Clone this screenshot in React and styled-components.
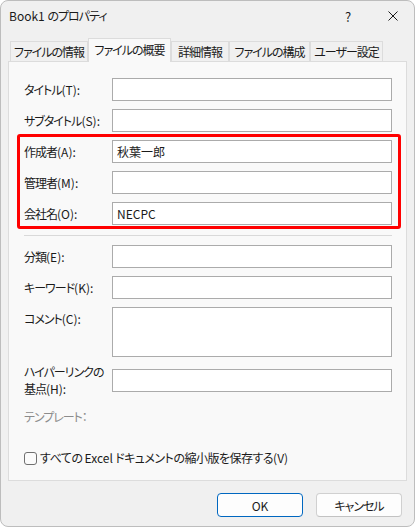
import React from "react";
import styled, { createGlobalStyle } from "styled-components";

const GlobalStyle = createGlobalStyle`
  html, body {
    margin: 0;
    padding: 0;
    background: #ffffff;
  }
  body {
    font-family: "Noto Sans CJK JP", "Noto Sans", sans-serif;
    font-size: 12px;
    color: #1b1b1b;
    font-feature-settings: "palt";
  }
`;

const Window = styled.div`
  width: 415px;
  height: 527px;
  box-sizing: border-box;
  border: 1px solid #bdbdbd;
  border-radius: 8px;
  background: #f0f0f0;
  display: flex;
  flex-direction: column;
  overflow: hidden;
`;

const TitleBar = styled.div`
  height: 30px;
  flex: none;
  display: flex;
  align-items: center;
  padding-left: 8px;
`;

const Title = styled.div`
  flex: 1;
  font-size: 12px;
  line-height: 16px;
  letter-spacing: -1px;
`;

const Latin = styled.span`
  letter-spacing: 0;
`;

const TitleButton = styled.div`
  width: ${({ w }) => w}px;
  height: 30px;
  display: flex;
  align-items: center;
  justify-content: center;
  font-size: 13px;
`;

const Body = styled.div`
  padding: 7px 7px 0 7px;
  display: flex;
  flex-direction: column;
`;

const TabRow = styled.div`
  display: flex;
  align-items: flex-end;
  padding-left: 2px;
  height: 23px;
`;

const Tab = styled.div`
  width: ${({ w }) => w}px;
  height: ${({ active }) => (active ? 24 : 20)}px;
  margin-bottom: ${({ active }) => (active ? -1 : 0)}px;
  box-sizing: border-box;
  border: 1px solid #dcdcdc;
  border-bottom: none;
  background: ${({ active }) => (active ? "#f9f9f9" : "#f0f0f0")};
  position: relative;
  z-index: ${({ active }) => (active ? 2 : 0)};
  display: flex;
  align-items: center;
  justify-content: center;
  padding-bottom: ${({ active }) => (active ? 2 : 0)}px;
  font-size: 12px;
  letter-spacing: -1px;
  white-space: nowrap;
`;

const Panel = styled.div`
  height: 420px;
  box-sizing: border-box;
  border: 1px solid #dcdcdc;
  background: #f9f9f9;
  padding: 16px 14px 14px 15px;
  display: flex;
  flex-direction: column;
  position: relative;
  z-index: 1;
`;

const Form = styled.div`
  display: flex;
  flex-direction: column;
  gap: 8px;
`;

const Row = styled.div`
  display: flex;
  align-items: ${({ top }) => (top ? "flex-start" : "center")};
  margin-top: ${({ shift }) => shift || 0}px;
`;

const Label = styled.div`
  flex: 0 0 88px;
  line-height: ${({ tall }) => (tall ? 17 : 16)}px;
  padding-top: ${({ top }) => (top ? 4 : 0)}px;
  letter-spacing: -1px;
  white-space: nowrap;
`;

const Key = styled.span`
  letter-spacing: 0;
`;

const Field = styled.input`
  flex: 1;
  min-width: 0;
  height: 23px;
  box-sizing: border-box;
  border: 1px solid #ababab;
  background: #ffffff;
  padding: 0 4px;
  margin: 0;
  font: inherit;
  color: #1b1b1b;
  outline: none;
`;

const Area = styled.textarea`
  flex: 1;
  min-width: 0;
  height: 50px;
  box-sizing: border-box;
  border: 1px solid #ababab;
  background: #ffffff;
  padding: 2px 4px;
  margin: 0;
  font: inherit;
  resize: none;
  outline: none;
`;

const Highlight = styled.div`
  display: flex;
  flex-direction: column;
  gap: 8px;
  position: relative;

  &::after {
    content: "";
    position: absolute;
    top: -6px;
    bottom: -4px;
    left: -7px;
    right: -9px;
    border: 3px solid #ff0000;
    border-radius: 3px;
    pointer-events: none;
  }
`;

const Separator = styled.div`
  height: 1px;
  background: #d9d9d9;
  margin: 2px 0 1px 0;
`;

const Muted = styled.div`
  color: #8c8c8c;
  line-height: 16px;
  margin-top: 4px;
  letter-spacing: -1px;
`;

const CheckRow = styled.label`
  margin-top: auto;
  display: flex;
  align-items: center;
  gap: 3px;
  line-height: 16px;
`;

const CheckText = styled.span`
  letter-spacing: -0.5px;
`;

const Box = styled.span`
  width: 13px;
  height: 13px;
  box-sizing: border-box;
  border: 1px solid #707070;
  border-radius: 3px;
  background: #fbfbfb;
  flex: none;
`;

const Footer = styled.div`
  display: flex;
  justify-content: flex-end;
  gap: 13px;
  padding: 12px 5px 0 0;
`;

const Button = styled.button`
  width: 86px;
  height: 24px;
  box-sizing: border-box;
  border: 1px solid ${({ primary }) => (primary ? "#0067c0" : "#d0d0d0")};
  border-bottom-color: ${({ primary }) => (primary ? "#0067c0" : "#c2c2c2")};
  border-radius: 4px;
  background: #fdfdfd;
  font: inherit;
  letter-spacing: ${({ primary }) => (primary ? 0 : -1)}px;
  color: #1b1b1b;
  padding: 0;
`;

const tabs = [
  { name: "ファイルの情報", w: 78 },
  { name: "ファイルの概要", w: 83, active: true },
  { name: "詳細情報", w: 58 },
  { name: "ファイルの構成", w: 81 },
  { name: "ユーザー設定", w: 73 },
];

function FieldRow({ text, hotkey, value = "" }) {
  return (
    <Row>
      <Label>
        {text}
        <Key>({hotkey}):</Key>
      </Label>
      <Field readOnly defaultValue={value} />
    </Row>
  );
}

export default function App() {
  return (
    <>
      <GlobalStyle />
      <Window>
        <TitleBar>
          <Title>
            <Latin>Book1 </Latin>のプロパティ
          </Title>
          <TitleButton w={48}>?</TitleButton>
          <TitleButton w={42}>
            <svg width="10" height="10" viewBox="0 0 10 10">
              <path d="M0.5 0.5L9.5 9.5M9.5 0.5L0.5 9.5" stroke="#1b1b1b" strokeWidth="1" />
            </svg>
          </TitleButton>
        </TitleBar>
        <Body>
          <TabRow>
            {tabs.map((t) => (
              <Tab key={t.name} w={t.w} active={t.active}>
                {t.name}
              </Tab>
            ))}
          </TabRow>
          <Panel>
            <Form>
              <FieldRow text="タイトル" hotkey="T" />
              <FieldRow text="サブタイトル" hotkey="S" />
              <Highlight>
                <FieldRow text="作成者" hotkey="A" value="秋葉一郎" />
                <FieldRow text="管理者" hotkey="M" />
                <FieldRow text="会社名" hotkey="O" value="NECPC" />
              </Highlight>
              <Separator />
              <FieldRow text="分類" hotkey="E" />
              <FieldRow text="キーワード" hotkey="K" />
              <Row top>
                <Label top>
                  コメント<Key>(C):</Key>
                </Label>
                <Area readOnly defaultValue="" />
              </Row>
              <Row shift={-2}>
                <Label tall>
                  ハイパーリンクの
                  <br />
                  基点<Key>(H):</Key>
                </Label>
                <Field readOnly defaultValue="" />
              </Row>
              <Muted>テンプレート：</Muted>
            </Form>
            <CheckRow>
              <Box />
              <CheckText>
                すべての <Latin>Excel</Latin> ドキュメントの縮小版を保存する<Latin>(V)</Latin>
              </CheckText>
            </CheckRow>
          </Panel>
          <Footer>
            <Button primary>OK</Button>
            <Button>キャンセル</Button>
          </Footer>
        </Body>
      </Window>
    </>
  );
}
